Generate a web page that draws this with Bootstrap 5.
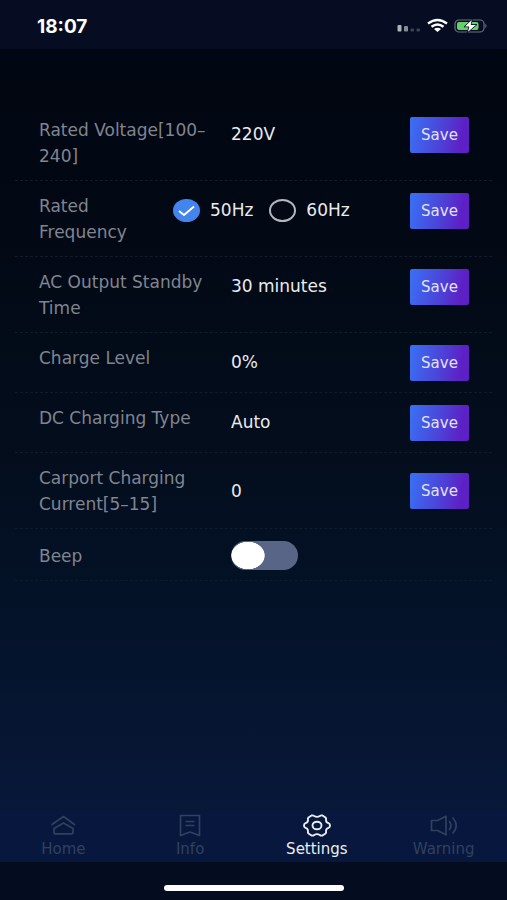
<!DOCTYPE html>
<html lang="en">
<head>
<meta charset="utf-8">
<meta name="viewport" content="width=device-width, initial-scale=1">
<title>Settings</title>
<link href="https://cdn.jsdelivr.net/npm/bootstrap@5.3.0/dist/css/bootstrap.min.css" rel="stylesheet">
<style>
body { font-family: "DejaVu Sans", Verdana, sans-serif; font-size: 17px; color: #e9ebee; background: #030c20; }
.screen { background: linear-gradient(#000510 0, #020813 20%, #030d1c 50%, #04132a 70%, #08183a 92%); }
.status-bar { height: 49px; padding: 3px 20px 0 37px; background: #060d22; }
.clock { font: 700 19px "Inter", sans-serif; color: #fff; }
.settings-list { padding: 56px 15px 0; }
.setting { padding: 12px 23px 11px 24px; border-bottom: 1px dashed #101c2b; line-height: 26px; }
.setting.compact { padding-bottom: 10px; }
.setting-label { width: 192px; padding-right: 16px; color: #808590; flex: none; }
.setting-label.short { width: 134px; }
.field { background: transparent; border: 0; padding: 0; color: inherit; appearance: none; height: 34px; min-width: 0; width: 100%; outline-offset: 2px; }
.save { width: 59px; height: 36px; padding: 0; border: 0; border-radius: 2px; font-size: 15px; color: #e4e2fb; background: linear-gradient(100deg, #3b6cf2 5%, #4b45d8 50%, #5d20c4 85%); flex: none; }
.save:hover { color: #fff; }
.choice { appearance: none; width: 27px; height: 23px; margin: 0; border: 2px solid #b4b6bf; border-radius: 50%; flex: none; }
.choice:checked { border: 0; background: #4285ee url("data:image/svg+xml,%3Csvg xmlns='http://www.w3.org/2000/svg' viewBox='0 0 27 23'%3E%3Cpath d='M6 12l5 4 10-8.500' fill='none' stroke='white' stroke-width='2'/%3E%3C/svg%3E") center/100% 100%; }
.choice-text { padding-left: 10px; }
.toggle { appearance: none; width: 67px; height: 29px; margin: 0; border-radius: 15px; background: radial-gradient(ellipse 17px 14px at 17px 50%, #fff 96%, transparent 100%) #596587; }
.toggle:checked { background: radial-gradient(ellipse 17px 14px at 50px 50%, #fff 96%, transparent 100%) #4285ee; }
.tab-bar { height: 50px; background: #07173d; }
.tab { color: #30415f; font-size: 15px; line-height: 20px; text-decoration: none; }
.tab.active { color: #e9efef; }
.home-area { height: 38px; background: #040c20; padding-top: 14px; }
.home-line { width: 180px; height: 6px; border-radius: 3px; background: #fff; }
</style>
<script src="https://cdn.jsdelivr.net/npm/bootstrap@5.3.0/dist/js/bootstrap.bundle.min.js"></script>
</head>
<body>
<div class="screen min-vh-100 d-flex flex-column">
  <header class="status-bar d-flex align-items-center justify-content-between">
    <span class="clock">18:07</span>
    <svg width="91" height="18" viewBox="0 0 91 18" aria-hidden="true">
      <rect x="1.500" y="8" width="4" height="6.500" rx="1" fill="#aeb2bc"/>
      <rect x="8" y="9" width="4" height="5.500" rx="1" fill="#858b99"/>
      <rect x="14.500" y="11.500" width="3.500" height="3" rx="1" fill="#3b4355"/>
      <rect x="20.500" y="11.500" width="3.500" height="3" rx="1" fill="#3b4355"/>
      <g fill="none" stroke="#fff" stroke-width="2.500">
        <path d="M32 6.600Q41.500 -.500 51 6.600"/>
        <path d="M35.500 9.800Q41.500 5.100 47.500 9.800"/>
      </g>
      <path d="M38 12q3.500-2.500 7 0L41.500 15z" fill="#fff"/>
      <rect x="59" y="3" width="29" height="12" rx="4" fill="none" stroke="#67707d" stroke-width="1.200"/>
      <path d="M89.300 6.500q2.500 2.300 0 4.800z" fill="#67707d"/>
      <rect x="61" y="5" width="21.500" height="8" rx="2" fill="#63d168"/>
      <path d="M76.500 2L68 9.800h5L71 16l10-8.500H75z" fill="#fff" stroke="#060d22" stroke-width=".9"/>
      <path d="M75.500 4L69.500 9.300h4.500L72.500 14l6.500-6h-4.800z" fill="#fff"/>
    </svg>
  </header>

  <main class="settings-list flex-grow-1">
    <div class="setting d-flex align-items-start">
      <label class="setting-label" for="voltage">Rated Voltage[100–240]</label>
      <input class="field flex-fill" id="voltage" type="text" value="220V">
      <button class="btn save" type="button">Save</button>
    </div>
    <div class="setting d-flex align-items-start" role="radiogroup" aria-labelledby="freq">
      <span class="setting-label short" id="freq">Rated Frequency</span>
      <div class="d-flex align-items-center flex-fill field">
        <input class="choice" type="radio" name="freq" id="f50" checked>
        <label class="choice-text me-3" for="f50">50Hz</label>
        <input class="choice" type="radio" name="freq" id="f60">
        <label class="choice-text" for="f60">60Hz</label>
      </div>
      <button class="btn save" type="button">Save</button>
    </div>
    <div class="setting d-flex align-items-start">
      <label class="setting-label" for="standby">AC Output Standby Time</label>
      <select class="field flex-fill" id="standby"><option>30 minutes</option></select>
      <button class="btn save" type="button">Save</button>
    </div>
    <div class="setting d-flex align-items-start">
      <label class="setting-label" for="level">Charge Level</label>
      <select class="field flex-fill" id="level"><option>0%</option></select>
      <button class="btn save" type="button">Save</button>
    </div>
    <div class="setting d-flex align-items-start">
      <label class="setting-label" for="dctype">DC Charging Type</label>
      <select class="field flex-fill" id="dctype"><option>Auto</option></select>
      <button class="btn save" type="button">Save</button>
    </div>
    <div class="setting d-flex align-items-center">
      <label class="setting-label" for="carport">Carport Charging Current[5–15]</label>
      <input class="field flex-fill" id="carport" type="text" value="0">
      <button class="btn save" type="button">Save</button>
    </div>
    <div class="setting compact d-flex align-items-center">
      <label class="setting-label" for="beep">Beep</label>
      <input class="toggle" type="checkbox" role="switch" id="beep">
    </div>
  </main>

  <nav class="tab-bar row g-0 text-center" aria-label="Main">
    <a class="tab col d-flex flex-column align-items-center" href="#home">
      <svg width="28" height="27" viewBox="0 0 28 27" fill="none" stroke="currentColor" stroke-width="1.700" stroke-linecap="round" stroke-linejoin="round" aria-hidden="true"><path d="M3 12.500L14.500 4.500l11 8"/><path d="M5 20v-3.500L14.500 11l9.500 5.500V20q0 1.800-1.500 1.800H6.500Q5 21.800 5 20z"/></svg>
      Home
    </a>
    <a class="tab col d-flex flex-column align-items-center" href="#info">
      <svg width="28" height="27" viewBox="0 0 28 27" fill="none" stroke="currentColor" stroke-width="1.700" stroke-linejoin="round" aria-hidden="true"><path d="M4.500 3.500h19v20L14 20l-9.500 3.500z"/><path d="M9.500 9.500h9M9.500 13.500h9"/></svg>
      Info
    </a>
    <a class="tab active col d-flex flex-column align-items-center" href="#settings" aria-current="page">
      <svg width="28" height="27" viewBox="0 0 28 27" fill="none" stroke="currentColor" stroke-width="1.900" stroke-linejoin="round" aria-hidden="true"><path d="M8.500 3.500Q10 3 11.200 4Q14 5.800 16.800 4Q18 3 19.500 3.500L22.500 5.500Q23.500 6.500 23 8Q23 10.500 25.500 11.200Q27 11.800 27 13.500Q27 15.200 25.500 15.800Q23 16.500 23 19Q23.500 20.500 22.500 21.500L19.500 23.500Q18 24 16.800 23Q14 21.200 11.200 23Q10 24 8.500 23.500L5.500 21.500Q4.500 20.500 5 19Q5 16.500 2.500 15.800Q1 15.200 1 13.500Q1 11.800 2.500 11.200Q5 10.500 5 8Q4.500 6.500 5.500 5.500z"/><ellipse cx="14" cy="13.500" rx="4.500" ry="3.800"/></svg>
      Settings
    </a>
    <a class="tab col d-flex flex-column align-items-center" href="#warning">
      <svg width="28" height="27" viewBox="0 0 28 27" fill="none" stroke="currentColor" stroke-width="1.700" stroke-linejoin="round" aria-hidden="true"><path d="M1.500 8.500h6L16 4.300v18.500L7.500 18.500h-6z"/><path d="M19.500 9.500q3 4 0 8M23 6q6.500 7.500 0 15" stroke-linecap="round"/></svg>
      Warning
    </a>
  </nav>
  <footer class="home-area d-flex justify-content-center align-items-center"><div class="home-line"></div></footer>
</div>
</body>
</html>
